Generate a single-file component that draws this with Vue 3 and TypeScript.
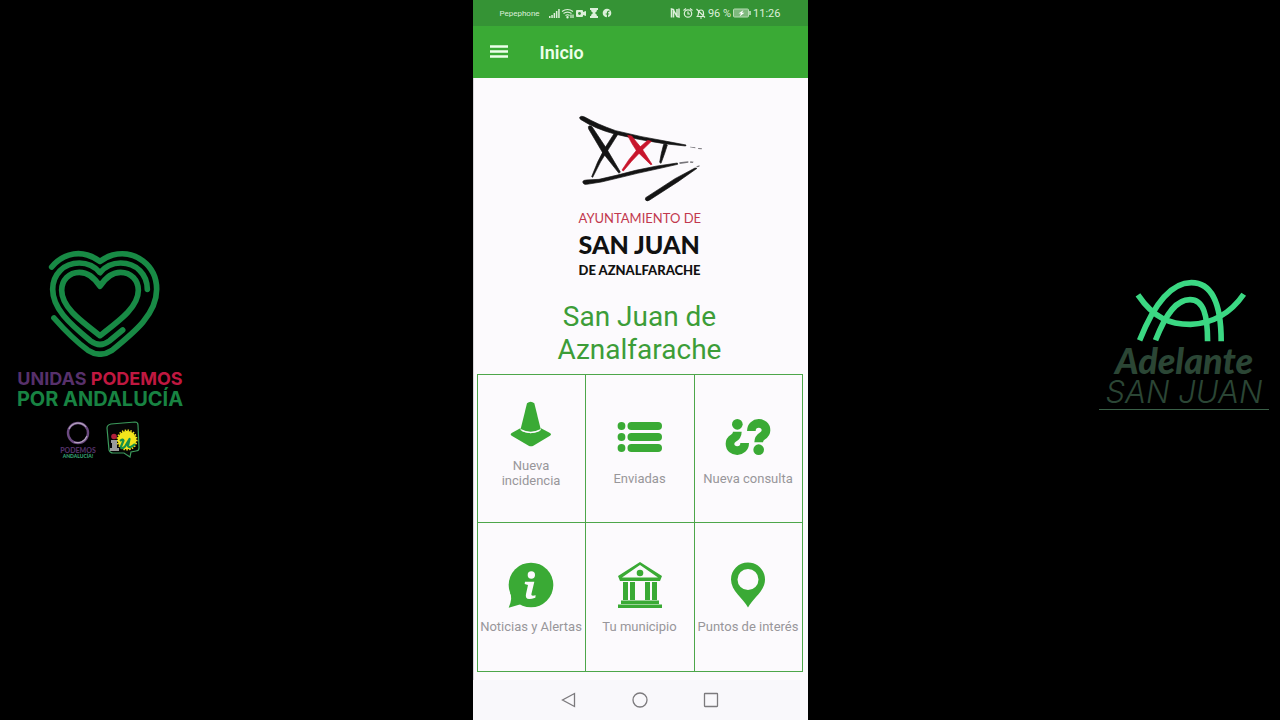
<script setup lang="ts">
type IconName = 'cone' | 'list' | 'question' | 'info' | 'building' | 'pin'

interface Tile {
  label: string
  icon: IconName
  tall?: boolean
}

const tiles: Tile[] = [
  { label: 'Nueva incidencia', icon: 'cone', tall: true },
  { label: 'Enviadas', icon: 'list' },
  { label: 'Nueva consulta', icon: 'question' },
  { label: 'Noticias y Alertas', icon: 'info' },
  { label: 'Tu municipio', icon: 'building' },
  { label: 'Puntos de interés', icon: 'pin' },
]
</script>

<template>
  <div class="screen">
    <aside class="side side-left">
      <div class="unidas">
        <svg class="heart" viewBox="144 30 336 321" aria-hidden="true">
          <g fill="none" stroke="#188a45" stroke-width="17" stroke-linecap="round" stroke-linejoin="round">
            <path d="M155 81C185 45 227 34 262 45Q282 51 300 64Q318 51 338 45C405 28 470 76 470 148C470 222 405 275 336 331Q300 354 264 331C222 300 190 266 162 234" />
            <path d="M442 148C442 104 410 69 362 69C337 69 315 80 300 98C285 80 263 69 238 69C190 69 158 104 158 148C158 204 205 248 272 303Q300 324 328 303L368 270" />
            <path d="M300 139C282 110 262 97 238 97C207 97 185 121 185 151C185 200 236 238 300 287C364 238 415 200 415 151C415 121 393 97 362 97C338 97 318 110 300 139Z" />
          </g>
        </svg>
        <div class="unidas-top"><span class="purple">UNIDAS</span> <span class="red">PODEMOS</span></div>
        <div class="unidas-bottom">POR ANDALUCÍA</div>
        <div class="partners">
          <div class="podemos">
            <svg class="ring" viewBox="0 0 24 24" aria-hidden="true">
              <circle cx="12" cy="12" r="10" fill="none" stroke="#6b4a80" stroke-width="2.4" />
              <path d="M3 8A10 10 0 0 1 20 6M21 15A10 10 0 0 1 8 21" fill="none" stroke="#b3a3bd" stroke-width="1.2" />
            </svg>
            <span class="podemos-name">PODEMOS</span>
            <span class="podemos-region">ANDALUCÍA!</span>
          </div>
          <svg class="iu" viewBox="0 0 34 38" role="img" aria-label="iu">
            <path d="M5 3L29 1Q32 1 32 4L33 27Q33 30 30 30L25 31L24 36L18 32L7 32Q4 32 3 29L1 7Q1 4 5 3Z" fill="#050505" stroke="#3c9a5c" stroke-width="1.2" />
            <circle cx="21" cy="19" r="9.300" fill="#f3e51c" />
            <circle cx="21" cy="19" r="9.800" fill="none" stroke="#f3e51c" stroke-width="1.600" stroke-dasharray="1.5 1.4" />
            <circle cx="8" cy="15.500" r="2.800" fill="#b3203b" />
            <path d="M5 19H11V27H13V30H4V27H6V22H5Z" fill="#9b9b9b" />
            <path d="M14 20Q17 17.500 17.500 19.500L15 25.500Q15.500 29 19 25.500L23.500 18L22 25Q23.500 28 29 23" fill="none" stroke="#16904a" stroke-width="2.200" stroke-linejoin="round" />
          </svg>
        </div>
      </div>
    </aside>

    <main class="phone">
      <div class="status">
        <div class="status-group">
          <span class="carrier">Pepephone</span>
          <svg class="status-left" viewBox="0 0 64 12" aria-hidden="true">
            <g fill="#dcefd9">
              <path d="M0 9h1.500v2H0zM2.300 8h1.500v3H2.300zM4.600 6h1.500v5H4.600zM6.900 4h1.500v7H6.900zM9.200 2h1.500v9H9.200z" />
              <path d="M28 3h5q1 0 1 1v1l3-1v5l-3-1v1q0 1-1 1h-5q-1 0-1-1V4q0-1 1-1z" />
              <path d="M41 1h8v2h-1q0 2-2.200 3q2.200 1 2.200 3h1v2h-8V9h1q0-2 2.200-3Q42 5 42 3h-1z" />
              <circle cx="58" cy="6" r="4.300" />
            </g>
            <g fill="none" stroke="#dcefd9" stroke-width="1.200">
              <path d="M13 4.500q5.500-4 11 0M14.500 6.500q4-2.800 8 0M16.500 8.500q2-1.500 4 0M22 7.500v3.500M24 7.500v3.500" />
              <circle cx="18.500" cy="10.200" r=".6" />
            </g>
            <path d="M58.500 11V5.500q0-1.500 2-1.300M56.700 7h3.500" fill="none" stroke="#359335" stroke-width="1.200" />
            <circle cx="30.500" cy="6.500" r="1.400" fill="#359335" />
          </svg>
        </div>
        <div class="status-group">
          <svg class="status-right" viewBox="0 0 36 12" aria-hidden="true">
            <g fill="none" stroke="#dcefd9" stroke-width="1.200">
              <path d="M1.500 10.500V2L3.500 2.500V10.500M3.500 3L7 9.500M7 2V9.500L9 10V1.500" stroke-width="1.500" />
              <circle cx="18" cy="6.500" r="3.700" />
              <path d="M18 4.500V7H20M13.500 3.500L16 1.500M22.500 3.500L20 1.500" />
              <path d="M27.500 9Q28.500 8 28.500 5.500Q28.500 3 31 3Q33.500 3 33.500 6V8M26.500 9.500H33.500M26.500 2L35 10.500M30 11H32" />
            </g>
          </svg>
          <span class="battery-text">96 %</span>
          <svg class="battery" viewBox="0 0 18 10" aria-hidden="true">
            <rect x=".5" y="1" width="15" height="8" rx="1" fill="#7fb97d" stroke="#b9dcb6" />
            <path d="M10.500 2L5.500 5.500H8L6.500 8.500L11.500 4.800H9Z" fill="#fff" />
            <path d="M17 3V7" stroke="#dcefd9" stroke-width="1.400" />
          </svg>
          <span class="clock">11:26</span>
        </div>
      </div>

      <header class="toolbar">
        <button class="menu" type="button" aria-label="Menú">
          <svg viewBox="0 0 18 14" aria-hidden="true">
            <path d="M0 1.500H18M0 6.500H18M0 11.500H18" stroke="#ecffea" stroke-width="2.400" />
          </svg>
        </button>
        <h1>Inicio</h1>
      </header>

      <section class="content">
        <div class="crest">
          <svg class="crest-mark" viewBox="55 45 372 261" aria-hidden="true">
            <g fill="#141414" stroke="#141414" stroke-width="2">
              <path d="M57 52Q62 46 72 51Q108 72 165 92Q240 111 318 124L376 135L375 138L310 131Q230 119 162 102Q105 87 61 59Q56 56 57 52Z" />
              <path d="M66 246Q67 240 77 240L115 238Q170 226 225 211Q285 197 350 189L351 193Q290 207 230 220Q165 236 122 246L78 253Q68 255 66 246Z" />
              <path d="M83 80Q87 74 94 80L137 145L179 216L175 220L126 158L84 87Z" />
              <path d="M162 98L174 99L147 142Q118 184 96 232L93 230Q109 186 132 145Z" />
              <path d="M309 133Q316 130 320 135L312 160L301 190L297 187Q301 160 309 133Z" />
              <path d="M255 293Q300 264 343 236L403 204L409 205L352 245L267 300Q258 306 254 299Z" />
            </g>
            <path fill="#77757a" d="M388 140L404 142L404 145L388 142ZM413 144L424 145L423 148L412 147ZM356 187L383 184L383 188L357 192ZM389 184L399 185L396 189L388 188ZM407 199L417 196L416 200L409 202Z" />
            <g fill="#c8152c" stroke="#c8152c" stroke-width="2">
              <path d="M201 106L213 108Q227 126 243 145L274 193L270 194L228 153Q212 130 201 106Z" />
              <path d="M261 121L272 124L242 153Q211 184 188 213L184 210Q204 177 229 149Z" />
            </g>
          </svg>
          <span class="crest-a">AYUNTAMIENTO DE</span>
          <span class="crest-b">SAN JUAN</span>
          <span class="crest-c">DE AZNALFARACHE</span>
        </div>

        <h2>San Juan de Aznalfarache</h2>

        <div class="tiles">
          <button v-for="tile in tiles" :key="tile.label" type="button" class="tile" :class="{ tall: tile.tall }">
            <svg v-if="tile.icon === 'cone'" class="icon" viewBox="108 94 138 138" aria-hidden="true">
              <path d="M165 101Q176 91 187 101L206 178Q176 194 146 178Z" />
              <path d="M145 176L119 190Q113 194 119 198L170 228Q177 232 184 228L234 198Q240 194 234 190L207 176L206 182Q176 199 146 182Z" />
              <path d="M149 183Q176 195 203 183" fill="none" stroke="#fcfafd" stroke-width="3" />
            </svg>
            <svg v-else-if="tile.icon === 'list'" class="icon" viewBox="0 0 46 46" aria-hidden="true">
              <g v-for="y in [12, 23, 34]" :key="y">
                <circle cx="4.500" :cy="y" r="3.900" />
                <rect x="10.500" :y="y - 3.900" width="34.500" height="7.800" rx="3.900" />
              </g>
            </svg>
            <svg v-else-if="tile.icon === 'question'" class="icon" viewBox="255 133 138 138" aria-hidden="true">
              <g id="mark">
                <path d="M334 184C334 154 378 154 378 182C378 203 356 194 356 218" fill="none" stroke="#3aaa35" stroke-width="26" />
                <circle cx="356" cy="240" r="16" />
              </g>
              <use href="#mark" transform="rotate(180 324 202)" />
            </svg>
            <svg v-else-if="tile.icon === 'info'" class="icon" viewBox="108 127 138 138" aria-hidden="true">
              <circle cx="177" cy="196" r="67" />
              <path d="M114 218Q123 236 110 264L146 254Z" />
              <circle cx="178" cy="166" r="11" fill="#fcfafd" />
              <path d="M159 186H187L178 224Q177 231 191 227L190 234Q157 246 162 223L168 196L158 193Z" fill="#fcfafd" />
            </svg>
            <svg v-else-if="tile.icon === 'building'" class="icon" viewBox="0 0 46 46" aria-hidden="true">
              <path fill-rule="evenodd" d="M23 0L45 14L43 19H3L1 14ZM23 3L5 15.500H41Z" />
              <circle cx="23" cy="11" r="3.300" />
              <path d="M6 20h5v18H6zM13 20h5v18h-5zM28 20h5v18h-5zM35 20h5v18h-5zM4 38.500h38V42H4zM1 42.600h44V46H1z" />
            </svg>
            <svg v-else class="icon" viewBox="0 0 46 46" aria-hidden="true">
              <path fill-rule="evenodd" d="M23 .5C32.500.5 40 8 40 17.500C40 29 28 36 23 45.500C18 36 6 29 6 17.500C6 8 13.500.5 23 .5ZM23 7A10.500 10.500 0 1 0 23 28A10.500 10.500 0 1 0 23 7Z" />
            </svg>
            <span class="label">{{ tile.label }}</span>
          </button>
        </div>
      </section>

      <nav class="system">
        <button type="button" aria-label="Atrás">
          <svg viewBox="0 0 16 16"><path d="M13.500 1.500V14.500L1.500 8Z" /></svg>
        </button>
        <button type="button" aria-label="Inicio">
          <svg viewBox="0 0 16 16"><circle cx="8" cy="8" r="7" /></svg>
        </button>
        <button type="button" aria-label="Recientes">
          <svg viewBox="0 0 16 16"><rect x="1.500" y="1.500" width="13" height="13" rx=".5" /></svg>
        </button>
      </nav>
    </main>

    <aside class="side side-right">
      <div class="adelante">
        <svg class="arches" viewBox="134 26 336 190" aria-hidden="true">
          <g fill="none" stroke="#3bd883" stroke-width="17">
            <path d="M147 211C188 108 240 37 303 37C365 37 393 100 393 214" />
            <path d="M195 211C228 125 260 88 299 88C340 88 352 135 352 214" />
            <path d="M142 74C190 145 240 163 300 163C370 160 421 130 461 72" />
          </g>
        </svg>
        <span class="adelante-name">Adelante</span>
        <span class="adelante-town">SAN JUAN</span>
      </div>
    </aside>
  </div>
</template>

<style>
body {
  margin: 0;
  background: #000;
}
</style>

<style scoped>
.screen {
  display: grid;
  grid-template-columns: 1fr 335px 1fr;
  min-height: 100vh;
  background: #000;
  font-family: Roboto, "Liberation Sans", sans-serif;
}
.side {
  display: flex;
  align-items: flex-start;
}
.side-left {
  padding: 250px 0 0 14px;
}
.side-right {
  justify-content: flex-end;
  padding: 279px 11px 0 0;
}
.unidas {
  display: flex;
  flex-direction: column;
  align-items: center;
  width: 172px;
  font-family: Inter, sans-serif;
  font-weight: 700;
  white-space: nowrap;
}
.heart {
  width: 112px;
  height: 107px;
  margin-left: 8px;
}
.unidas-top {
  margin-top: 12px;
  font-size: 18px;
  line-height: 20px;
}
.purple { color: #57306b; }
.red { color: #c01840; }
.unidas-bottom {
  color: #188342;
  font-size: 20px;
  line-height: 20px;
}
.partners {
  display: flex;
  gap: 10px;
  margin-top: 12px;
}
.podemos {
  display: flex;
  flex-direction: column;
  align-items: center;
  font-family: Lato, sans-serif;
  font-weight: 900;
}
.ring {
  width: 24px;
  height: 24px;
}
.podemos-name {
  margin-top: 2px;
  color: #513065;
  font-size: 7px;
  line-height: 7px;
}
.podemos-region {
  color: #36a273;
  font-size: 5px;
  line-height: 5px;
}
.iu {
  width: 34px;
  height: 38px;
}
.phone {
  display: flex;
  flex-direction: column;
  background: #fcfafd;
}
.status {
  display: flex;
  justify-content: space-between;
  align-items: center;
  height: 26px;
  padding: 0 27px;
  background: #359335;
  color: #dcefd9;
}
.status-group {
  display: flex;
  align-items: center;
}
.carrier {
  font-size: 8px;
}
.status-left {
  width: 64px;
  height: 12px;
  margin-left: 9px;
}
.status-right {
  width: 36px;
  height: 12px;
  margin-right: 2px;
}
.battery-text,
.clock {
  font-size: 11px;
}
.battery {
  width: 18px;
  height: 10px;
  margin: 0 2px;
}
.toolbar {
  display: flex;
  align-items: center;
  gap: 32px;
  height: 52px;
  padding: 0 17px;
  background: #3aaa35;
}
.toolbar h1 {
  margin: 0;
  color: #ecffea;
  font-size: 18px;
  font-weight: 600;
}
button {
  margin: 0;
  padding: 0;
  border: 0;
  background: none;
  font-family: inherit;
  cursor: pointer;
}
.menu svg {
  display: block;
  width: 18px;
  height: 14px;
}
.content {
  flex: 1;
  padding: 37px 5px 8px 3px;
  border-left: 1px solid #d8d6d9;
}
.crest {
  display: flex;
  flex-direction: column;
  width: 122px;
  margin: 0 auto;
  font-family: Lato, sans-serif;
  white-space: nowrap;
}
.crest-mark {
  width: 124px;
  height: 87px;
  margin-bottom: 5px;
}
.crest-a {
  color: #c2384e;
  font-size: 13px;
  line-height: 22px;
}
.crest-b {
  color: #111;
  font-size: 25px;
  font-weight: 900;
  line-height: 30px;
}
.crest-c {
  color: #111;
  font-size: 13px;
  font-weight: 900;
  line-height: 22px;
}
h2 {
  width: 200px;
  margin: 19px auto 8px;
  color: #3c9d38;
  font-size: 28px;
  font-weight: 400;
  line-height: 33px;
  text-align: center;
}
.tiles {
  display: grid;
  grid-template-columns: 1fr 108px 1fr;
  grid-template-rows: 147px 148px;
  gap: 1px;
  padding: 1px;
  background: #4da64a;
}
.tile {
  display: flex;
  flex-direction: column;
  align-items: center;
  gap: 11px;
  padding-top: 39px;
  background: #fcfafd;
  color: #98969a;
  font-size: 13px;
  line-height: 15px;
  white-space: nowrap;
}
.tile.tall {
  padding-top: 26px;
  white-space: normal;
}
.tall .label {
  max-width: 80px;
}
.icon {
  flex: none;
  width: 46px;
  height: 46px;
  fill: #3aaa35;
}
.system {
  display: flex;
  justify-content: center;
  align-items: center;
  gap: 55px;
  height: 40px;
  background: #f9f8fb;
}
.system svg {
  display: block;
  width: 16px;
  height: 16px;
  fill: none;
  stroke: #7c7a7d;
  stroke-width: 1.3;
}
.adelante {
  display: flex;
  flex-direction: column;
  align-items: center;
  width: 170px;
  border-bottom: 1px solid #3a6048;
  color: #2b4635;
  font-style: italic;
  white-space: nowrap;
}
.arches {
  width: 112px;
  height: 63px;
  margin-left: 14px;
}
.adelante-name {
  font-family: Lato, sans-serif;
  font-size: 36px;
  font-weight: 900;
  line-height: 36px;
}
.adelante-town {
  padding-bottom: 3px;
  font-family: Inter, sans-serif;
  font-size: 31px;
  font-weight: 300;
  line-height: 28px;
}
</style>
